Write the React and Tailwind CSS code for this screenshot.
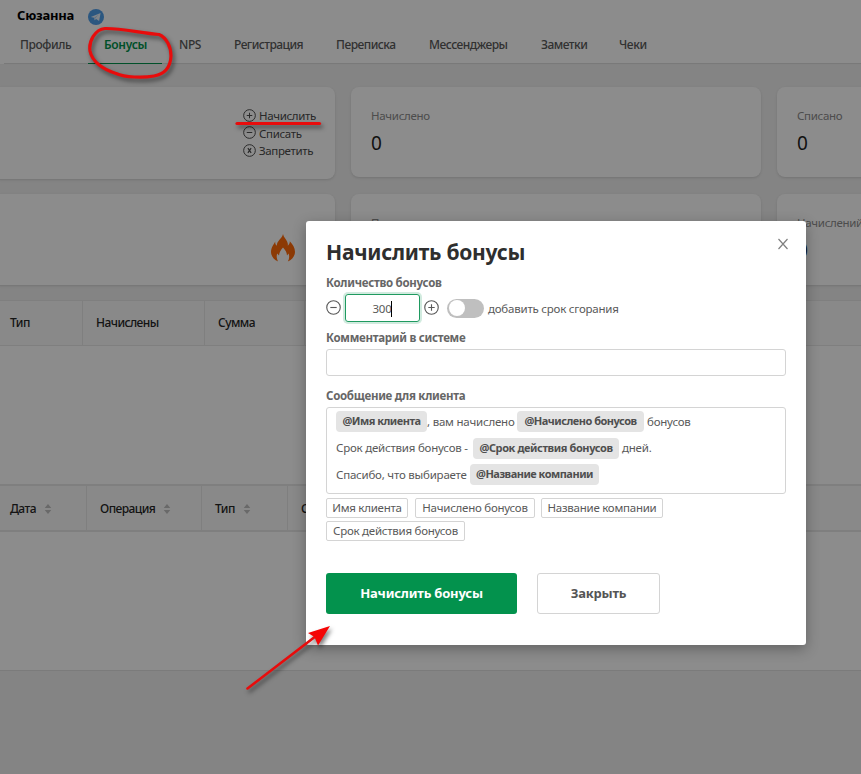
import clsx from 'clsx'

const tabs = [
  { label: 'Профиль', width: 'w-[84px] tracking-[-0.4px]' },
  { label: 'Бонусы', width: 'w-[75px] tracking-[-0.3px]', active: true },
  { label: 'NPS', width: 'w-[55px] tracking-[-0.4px]' },
  { label: 'Регистрация', width: 'w-[102px] tracking-[-0.55px]' },
  { label: 'Переписка', width: 'w-[93px] tracking-[-0.5px]' },
  { label: 'Мессенджеры', width: 'w-[112px] tracking-[-0.5px]' },
  { label: 'Заметки', width: 'w-[78px] tracking-[-0.5px]' },
  { label: 'Чеки', width: 'w-[61px] tracking-[-0.4px]' },
]

const CircleIcon = ({ type, className }) => (
  <svg viewBox="0 0 16 16" fill="none" stroke="currentColor" className={className}>
    <circle cx="8" cy="8" r="7.2" strokeWidth="1.2" />
    {type === 'plus' && <path d="M8 4.6v6.8M4.6 8h6.8" strokeWidth="1.2" />}
    {type === 'minus' && <path d="M4.6 8h6.8" strokeWidth="1.2" />}
    {type === 'close' && <path d="M6 5l4 6M10 5l-4 6" strokeWidth="1.4" />}
  </svg>
)

const TelegramIcon = () => (
  <svg viewBox="0 0 16 16" className="h-4 w-4">
    <circle cx="8" cy="8" r="8" fill="#4f9eea" />
    <path d="M2.8 8.1L12.6 4l-1.5 8-3-2.1-1.5 1.4-.5-2.6z" fill="#e8f1fa" />
    <path d="M6.1 8.7l4.7-3.1-3.5 3.6-.6 2z" fill="#a9cdf0" />
  </svg>
)

const FireIcon = () => (
  <svg viewBox="0 0 24 28" className="h-7 w-6" fill="#ff6a0a">
    <path d="M12 0C12.600 3.200 15 5 16.200 7.800C16.800 9.200 17 10.500 16.800 11.800C18.200 10.600 18.900 9 18.800 7.200C21.800 10.500 24 13.500 24 18C24 22 21 25.800 16.800 27.600C18.300 25 18.600 22.500 17.600 19.500L16 21.600C15.800 18 14.500 16.500 12 13.500C9.800 16 8.300 18 8 21.600L6.200 19.500C5.200 22.500 5.800 25 7.200 27.600C2.800 25.800 0 22 0 18C0 13.500 2.600 10.800 4.200 7.500C4.100 9.400 4.600 10.800 5.800 11.800C5.800 6.500 11.400 4.500 12 0Z" />
  </svg>
)

const Sorter = () => (
  <svg viewBox="0 0 8 12" className="h-3 w-2" fill="#bfbfbf">
    <path d="M4 1L7.300 5H.7zM4 11L.7 7h6.600z" />
  </svg>
)

const Header = () => (
  <header className="h-[65px] border-b border-[#eeeeee] bg-white">
    <div className="flex h-[34px] items-center gap-[14px] pl-[17px]">
      <h1 className="w-[57px] whitespace-nowrap text-[13px] font-bold tracking-[-0.25px] text-black -mt-[3px]">Сюзанна</h1>
      <TelegramIcon />
    </div>
    <nav className="ml-1 flex h-[30px] border-b border-[#dcdcdc]">
      {tabs.map((tab) => (
        <div
          key={tab.label}
          className={clsx('h-[30px] shrink-0 whitespace-nowrap pt-px text-[12px] font-medium leading-5', tab.width)}
        >
          <div className={clsx('h-[29px]', tab.active ? 'mr-px border-b border-[#01924c] pl-4 font-semibold text-[#01924c]' : 'pl-4 text-[#595959]')}>
            {tab.label}
          </div>
        </div>
      ))}
    </nav>
  </header>
)

const Stat = ({ label, value = '0', className }) => (
  <div className={clsx('flex flex-col rounded-lg bg-white px-5 pt-5 shadow-sm', className)}>
    <span className="whitespace-nowrap text-[11.5px] leading-[18px] tracking-[-0.3px] text-[#8c8c8c]">{label}</span>
    <span className="mt-1 text-[19px] leading-7 text-[#1f1f1f]">{value}</span>
  </div>
)

const Action = ({ type, children }) => (
  <li className="flex items-center gap-[3px]">
    <CircleIcon type={type} className="-mt-px h-[13px] w-[13px]" />
    {children}
  </li>
)

const Actions = () => (
  <ul className="flex flex-col pl-[243px] pt-5 text-[11.5px] leading-[17.5px] tracking-[-0.35px] text-[#4a4a4a]">
    <Action type="plus">Начислить</Action>
    <Action type="minus">Списать</Action>
    <Action type="close">Запретить</Action>
  </ul>
)

const HeadCell = ({ children, width, sortable }) => (
  <div className={clsx('flex shrink-0 items-center border-r border-[#e8e8e8] text-[12px] font-medium tracking-[-0.55px] text-[#262626]', width, sortable && 'gap-2 pt-px')}>
    {children}
    {sortable && <Sorter />}
  </div>
)

const Page = () => (
  <div className="h-[774px] bg-[#f0f0f0]">
    <Header />
    <div className="grid grid-cols-[335px_410px_410px] gap-x-4 pt-[22px]">
      <div className="-ml-2 h-[92px] rounded-lg bg-white pl-2 shadow-sm"><Actions /></div>
      <Stat label="Начислено" className="h-[90px]" />
      <Stat label="Списано" className="h-[90px]" />
    </div>
    <div className="mt-[15px] grid grid-cols-[335px_410px_410px] gap-x-4">
      <div className="-ml-2 flex h-[91px] justify-end rounded-lg bg-white pr-10 pt-10 shadow-sm"><FireIcon /></div>
      <Stat label="Потрачено" className="h-[91px]" />
      <Stat label="Начислений" className="h-[91px]" />
    </div>
    <div className="mt-[15px] flex h-[46px] border-y border-[#e8e8e8] bg-[#fafafa]">
      <HeadCell width="w-[83px] pl-[10px]">Тип</HeadCell>
      <HeadCell width="w-[122px] pl-[13px]">Начислены</HeadCell>
      <HeadCell width="w-[100px] pl-[13px]">Сумма</HeadCell>
    </div>
    <div className="h-[138px] bg-white" />
    <div className="flex h-[48px] border-y-2 border-[#e8e8e8] bg-[#fafafa]">
      <HeadCell width="w-[87px] pl-[10px]" sortable>Дата</HeadCell>
      <HeadCell width="w-[115px] pl-[13px]" sortable>Операция</HeadCell>
      <HeadCell width="w-[86px] pl-[13px]" sortable>Тип</HeadCell>
      <HeadCell width="w-[120px] pl-[13px]" sortable>Сумма</HeadCell>
    </div>
    <div className="h-[139px] border-b border-[#e0e0e0] bg-white" />
  </div>
)

const Label = ({ children, className }) => (
  <div className={clsx('whitespace-nowrap text-[11.5px] font-bold leading-4 tracking-[-0.28px] text-[#666]', className)}>{children}</div>
)

const Mention = ({ children, className }) => (
  <b className={clsx('flex h-[21px] shrink-0 items-center justify-center rounded bg-[#e4e4e4] text-[11px] text-[#4f4f4f]', className)}>{children}</b>
)

const Chip = ({ children, className }) => (
  <button className={clsx('flex h-5 items-center justify-center rounded-[2px] border border-[#d4d4d4]', className)}>{children}</button>
)

const BonusModal = () => (
  <section className="absolute left-[306px] top-[221px] h-[424px] w-[500px] rounded-[3px] bg-white px-5 pt-[17px] shadow-[0_4px_14px_rgba(0,0,0,0.3)]">
    <svg viewBox="0 0 10 12" className="absolute right-[18px] top-[17px] h-3 w-[10px]" stroke="#808080" strokeWidth="1.2" fill="none">
      <path d="M.5 1l9 10M9.500 1l-9 10" />
    </svg>
    <h2 className="whitespace-nowrap text-[21px] font-bold leading-7 tracking-[-0.25px] text-[#2e2e2e]">Начислить бонусы</h2>
    <Label className="mt-[9px]">Количество бонусов</Label>
    <div className="mt-[3px] flex h-7 items-center text-[11.5px] text-[#595959]">
      <CircleIcon type="minus" className="-mt-px h-[15px] w-[15px]" />
      <div className="ml-1 flex h-7 w-[75px] items-center justify-center rounded-[3px] border border-[#1f9a60] pt-px shadow-[0_0_0_2px_rgba(1,146,76,0.18)]">
        <span className="tracking-[-0.3px]">300</span>
        <span className="h-4 w-px bg-black" />
      </div>
      <CircleIcon type="plus" className="-mt-px ml-1 h-[15px] w-[15px]" />
      <div className="ml-2 flex h-[19px] w-[37px] items-center rounded-full bg-[#bfbfbf] pl-[2px]">
        <span className="h-4 w-4 rounded-full bg-white" />
      </div>
      <span className="ml-1 whitespace-nowrap pt-0.5 tracking-[-0.22px]">добавить срок сгорания</span>
    </div>
    <Label className="mt-2">Комментарий в системе</Label>
    <div className="mt-[3px] h-[27px] rounded-[3px] border border-[#d4d4d4]" />
    <Label className="mt-3">Сообщение для клиента</Label>
    <div className="mt-[3px] flex h-[87px] flex-col gap-[5.5px] whitespace-nowrap rounded-[3px] border border-[#d4d4d4] px-[9px] pt-[3px] text-[11.5px] tracking-[-0.22px] text-[#595959]">
      <div className="flex items-center">
        <Mention className="w-[91px] tracking-[-0.5px]">@Имя клиента</Mention>
        <span className="w-[90px]">, вам начислено</span>
        <Mention className="w-[127px] tracking-[-0.5px]">@Начислено бонусов</Mention>
        <span className="ml-[3px]">бонусов</span>
      </div>
      <div className="flex items-center">
        <span className="w-[137px]">Срок действия бонусов -</span>
        <Mention className="w-[146px] tracking-[-0.4px]">@Срок действия бонусов</Mention>
        <span className="ml-[3px]">дней.</span>
      </div>
      <div className="flex items-center">
        <span className="w-[134px]">Спасибо, что выбираете</span>
        <Mention className="w-[129px] tracking-[-0.5px]">@Название компании</Mention>
      </div>
    </div>
    <div className="mt-1 flex flex-wrap gap-x-[7px] gap-y-[3px] whitespace-nowrap text-[11.5px] tracking-[-0.25px] text-[#595959]">
      <Chip className="w-[82px]">Имя клиента</Chip>
      <Chip className="w-[120px]">Начислено бонусов</Chip>
      <Chip className="-ml-px w-[122px]">Название компании</Chip>
      <Chip className="w-[139px]">Срок действия бонусов</Chip>
    </div>
    <div className="mt-8 flex gap-5 text-[13px] font-bold tracking-[-0.2px]">
      <button className="h-[41px] w-[191px] rounded-[3px] bg-[#03924d] text-white">Начислить бонусы</button>
      <button className="h-[41px] w-[123px] rounded-[3px] border border-[#d4d4d4] text-[#555]">Закрыть</button>
    </div>
  </section>
)

const Marks = () => (
  <svg viewBox="0 0 861 774" className="pointer-events-none absolute left-0 top-0 h-[774px] w-[861px] drop-shadow-[2px_3px_2px_rgba(0,0,0,0.5)]" fill="none" stroke="#e80c0c" strokeWidth="3.2" strokeLinecap="round" strokeLinejoin="round">
    <path d="M105 28.500C120 28 141 33 159 34.500C167 38 171 47 171 56C170.500 67 165 74 154 76C143 78 125 77.500 116 73.500C104 70 92 62 90 51C88.500 41 95 29.500 105 28.500Z" />
    <path d="M237 123.500H319.500" />
    <path d="M247.500 688.500L316 636" strokeWidth="2.600" />
    <path d="M330 626L308 633L314.500 637L318 645.500Z" fill="#f50505" stroke="none" />
  </svg>
)

const App = () => {
  return (
    <main className="relative h-[774px] w-[861px] overflow-hidden font-['Noto_Sans',sans-serif]">
      <Page />
      <div className="absolute inset-0 bg-black/45" />
      <BonusModal />
      <Marks />
    </main>
  )
}

export default App
